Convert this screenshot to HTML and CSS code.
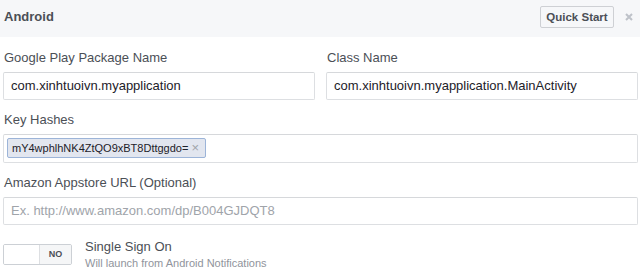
FILE: index.html
```html
<!DOCTYPE html>
<html lang="en">
<head>
    <meta charset="UTF-8">
    <title>Android</title>
    <link rel="stylesheet" href="styles.css">
</head>
<body>
    <div class="header">
        <span class="header-title">Android</span>
        <div class="header-actions">
            <button class="quick-start">Quick Start</button>
            <svg class="close" width="8" height="8" viewBox="0 0 8 8">
                <path d="M1 1 L7 7 M7 1 L1 7" stroke="#bec2c9" stroke-width="2"/>
            </svg>
        </div>
    </div>

    <div class="form">
        <div class="row">
            <div class="field">
                <label>Google Play Package Name</label>
                <div class="input">com.xinhtuoivn.myapplication</div>
            </div>
            <div class="field">
                <label>Class Name</label>
                <div class="input">com.xinhtuoivn.myapplication.MainActivity</div>
            </div>
        </div>

        <div class="field">
            <label>Key Hashes</label>
            <div class="input tokens">
                <span class="token">mY4wphlhNK4ZtQO9xBT8Dttggdo= <span class="token-x">&times;</span></span>
            </div>
        </div>

        <div class="field">
            <label>Amazon Appstore URL (Optional)</label>
            <div class="input placeholder">Ex. http://www.amazon.com/dp/B004GJDQT8</div>
        </div>

        <div class="toggle-row">
            <div class="toggle">
                <span class="toggle-off"></span>
                <span class="toggle-label">NO</span>
            </div>
            <div class="toggle-text">
                <div class="toggle-title">Single Sign On</div>
                <div class="toggle-sub">Will launch from Android Notifications</div>
            </div>
        </div>
    </div>
</body>
</html>
```

FILE: styles.css
```css
body {
    font-family: "Liberation Sans", Arial, sans-serif;
    background-color: #fff;
    color: #1d2129;
    margin: 0;
    padding: 0;
}
.header {
    height: 37px;
    background-color: #f6f7f9;
    display: flex;
    align-items: center;
    justify-content: space-between;
    padding: 0 7px 0 4px;
}
.header-title {
    font-size: 13px;
    font-weight: bold;
    color: #4b4f56;
    margin-top: -4px;
}
.header-actions {
    display: flex;
    align-items: center;
    gap: 11px;
    margin-top: -4px;
}
.quick-start {
    font-family: inherit;
    font-size: 11.5px;
    font-weight: bold;
    color: #4b4f56;
    background-color: #f6f7f9;
    border: 1px solid #ced0d4;
    border-radius: 2px;
    height: 22px;
    width: 74px;
    padding: 0;
}
.close {
    display: block;
}
.form {
    padding: 12px 2px 0 3px;
    display: flex;
    flex-direction: column;
    gap: 11px;
}
.row {
    display: grid;
    grid-template-columns: 1fr 1fr;
    gap: 11px;
}
.field label {
    display: block;
    font-size: 13px;
    line-height: 18px;
    color: #4b4f56;
    padding-left: 1px;
    margin-bottom: 5px;
}
.input {
    height: 28px;
    box-sizing: border-box;
    border: 1px solid #dddfe2;
    border-top-color: #d6d8db;
    border-radius: 2px;
    font-size: 13px;
    line-height: 26px;
    padding: 0 7px;
    white-space: nowrap;
    overflow: hidden;
}
.placeholder {
    color: #a0a4aa;
}
.tokens {
    height: 29px;
    padding: 3px 3px;
    line-height: 20px;
}
.token {
    display: inline-block;
    height: 20px;
    box-sizing: border-box;
    line-height: 18px;
    background-color: #e2e6ef;
    border: 1px solid #9cb4d8;
    border-radius: 2px;
    font-size: 11px;
    padding: 0 6px 0 4px;
    color: #1d2129;
}
.token-x {
    color: #a0a4aa;
    font-size: 13px;
}
.toggle-row {
    display: flex;
    align-items: flex-start;
    gap: 13px;
    margin-top: 8px;
}
.toggle {
    display: flex;
    width: 69px;
    height: 21px;
    box-sizing: border-box;
    border: 1px solid #ccd0d5;
    border-radius: 2px;
    overflow: hidden;
}
.toggle-off {
    width: 35px;
    background-color: #fff;
    border-right: 1px solid #dddfe2;
}
.toggle-label {
    flex: 1;
    background-color: #f5f6f7;
    font-size: 9px;
    font-weight: bold;
    color: #4b4f56;
    text-align: center;
    line-height: 19px;
}
.toggle-title {
    font-size: 13px;
    line-height: 16px;
    color: #4b4f56;
    margin-top: -5px;
}
.toggle-sub {
    font-size: 11px;
    line-height: 14px;
    color: #90949c;
    margin-top: 1px;
}
```
